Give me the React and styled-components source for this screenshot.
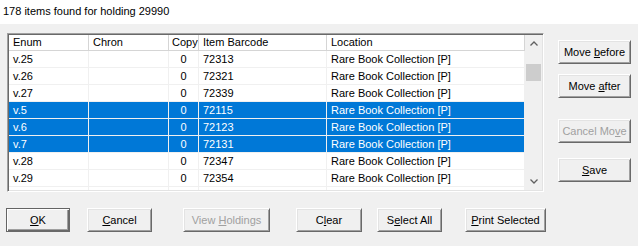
import React from "react"
import styled, { createGlobalStyle } from "styled-components"

const GlobalStyle = createGlobalStyle`
  html, body {
    margin: 0;
    padding: 0;
    background: #f0f0f0;
  }
  body {
    font-family: "Liberation Sans", Arial, sans-serif;
    font-size: 11px;
    color: #000;
  }
`

const rows = [
  { enumv: "v.25", copy: "0", barcode: "72313", location: "Rare Book Collection [P]" },
  { enumv: "v.26", copy: "0", barcode: "72321", location: "Rare Book Collection [P]" },
  { enumv: "v.27", copy: "0", barcode: "72339", location: "Rare Book Collection [P]" },
  { enumv: "v.5", copy: "0", barcode: "72115", location: "Rare Book Collection [P]", selected: true },
  { enumv: "v.6", copy: "0", barcode: "72123", location: "Rare Book Collection [P]", selected: true },
  { enumv: "v.7", copy: "0", barcode: "72131", location: "Rare Book Collection [P]", selected: true },
  { enumv: "v.28", copy: "0", barcode: "72347", location: "Rare Book Collection [P]" },
  { enumv: "v.29", copy: "0", barcode: "72354", location: "Rare Book Collection [P]" },
  { enumv: "v.30", copy: "0", barcode: "72362", location: "Rare Book Collection [P]" },
]

const Key = ({ children }) => <u>{children}</u>

const App = () => (
  <>
    <GlobalStyle />
    <Window>
      <TitleStrip>178 items found for holding 29990</TitleStrip>
      <Main>
        <ListBox>
          <Table>
            <HeaderRow>
              <HeadCell>Enum</HeadCell>
              <HeadCell>Chron</HeadCell>
              <HeadCell>Copy</HeadCell>
              <HeadCell>Item Barcode</HeadCell>
              <HeadCell>Location</HeadCell>
            </HeaderRow>
            {rows.map((r, i) => (
              <Row key={i} selected={r.selected}>
                <Cell>{r.enumv}</Cell>
                <Cell></Cell>
                <Cell center>{r.copy}</Cell>
                <Cell>{r.barcode}</Cell>
                <Cell>{r.location}</Cell>
              </Row>
            ))}
          </Table>
          <ScrollBar>
            <Arrow>
              <svg width="8" height="5" viewBox="0 0 8 5">
                <polyline points="0.5,4.5 4,1 7.5,4.5" fill="none" stroke="#606060" strokeWidth="1.3" />
              </svg>
            </Arrow>
            <Track>
              <Thumb />
            </Track>
            <Arrow>
              <svg width="8" height="5" viewBox="0 0 8 5">
                <polyline points="0.5,0.5 4,4 7.5,0.5" fill="none" stroke="#606060" strokeWidth="1.3" />
              </svg>
            </Arrow>
          </ScrollBar>
        </ListBox>
        <SideButtons>
          <Button gap={7}><Label>Move <Key>b</Key>efore</Label></Button>
          <Button gap={10}><Label>Move <Key>a</Key>fter</Label></Button>
          <Button gap={21} disabled><Label>Cancel Mo<Key>v</Key>e</Label></Button>
          <Button gap={15}><Label><Key>S</Key>ave</Label></Button>
        </SideButtons>
      </Main>
      <Footer>
        <Button isDefault w={64} left={6}><Label><Key>O</Key>K</Label></Button>
        <Button w={65} left={17}><Label><Key>C</Key>ancel</Label></Button>
        <Button w={87} left={31} disabled><Label>View <Key>H</Key>oldings</Label></Button>
        <Button w={66} left={26}><Label>C<Key>l</Key>ear</Label></Button>
        <Button w={65} left={15}><Label>S<Key>e</Key>lect All</Label></Button>
        <Button w={81} left={23}><Label><Key>P</Key>rint Selected</Label></Button>
      </Footer>
    </Window>
  </>
)

export default App

const Window = styled.div`
  width: 638px;
  height: 246px;
  background: #f0f0f0;
  display: flex;
  flex-direction: column;
  overflow: hidden;
`

const TitleStrip = styled.div`
  height: 24px;
  background: #fff;
  padding: 5px 0 0 3px;
  box-sizing: border-box;
  line-height: 13px;
`

const Main = styled.div`
  display: flex;
  align-items: flex-start;
  padding: 9px 0 0 7px;
`

const ListBox = styled.div`
  width: 537px;
  height: 159px;
  box-sizing: border-box;
  border-top: 1px solid #a0a0a0;
  border-left: 1px solid #a0a0a0;
  border-right: 1px solid #ffffff;
  border-bottom: 1px solid #ffffff;
  box-shadow: inset 1px 1px 0 #696969, inset -1px -1px 0 #e3e3e3;
  padding: 1px;
  display: flex;
  background: #fff;
`

const Table = styled.div`
  width: 516px;
  overflow: hidden;
  background: #fff;
`

const HeaderRow = styled.div`
  display: grid;
  grid-template-columns: 80px 80px 30px 128px 198px;
  height: 16px;
  box-sizing: border-box;
  border-bottom: 1px solid #d5d5d5;
`

const HeadCell = styled.div`
  padding-left: 4px;
  line-height: 15px;
  border-right: 1px solid #d5d5d5;
  white-space: nowrap;
  overflow: hidden;
  &:nth-child(3) {
    padding-left: 3px;
  }
`

const Row = styled.div`
  display: grid;
  grid-template-columns: 80px 80px 30px 128px 198px;
  height: 17px;
  box-sizing: border-box;
  border-bottom: 1px solid #f0f0f0;
  background: ${(p) => (p.selected ? "#0078d7" : "#fff")};
  color: ${(p) => (p.selected ? "#fff" : "#000")};
`

const Cell = styled.div`
  padding-left: ${(p) => (p.center ? "0" : "4px")};
  text-align: ${(p) => (p.center ? "center" : "left")};
  line-height: 16px;
  border-right: 1px solid #f0f0f0;
  white-space: nowrap;
  overflow: hidden;
`

const ScrollBar = styled.div`
  width: 17px;
  display: flex;
  flex-direction: column;
  background: #f0f0f0;
`

const Arrow = styled.div`
  height: 17px;
  display: flex;
  align-items: center;
  justify-content: center;
`

const Track = styled.div`
  flex: 1;
  padding: 12px 1px 0;
`

const Thumb = styled.div`
  height: 17px;
  background: #cdcdcd;
`

const SideButtons = styled.div`
  display: flex;
  flex-direction: column;
  margin-left: 14px;
`

const Label = styled.span`
  white-space: pre;
  u {
    text-decoration: underline;
    text-underline-offset: 1px;
  }
`

const Button = styled.div`
  width: ${(p) => (p.w ? p.w : 73)}px;
  height: 24px;
  margin-top: ${(p) => (p.gap ? p.gap : 0)}px;
  margin-left: ${(p) => (p.left ? p.left : 0)}px;
  box-sizing: border-box;
  display: flex;
  align-items: center;
  justify-content: center;
  background: #f0f0f0;
  color: ${(p) => (p.disabled ? "#a0a0a0" : "#000")};
  border-top: 1px solid ${(p) => (p.isDefault ? "#646464" : "#ffffff")};
  border-left: 1px solid ${(p) => (p.isDefault ? "#646464" : "#ffffff")};
  border-right: 1px solid #696969;
  border-bottom: 1px solid #696969;
  box-shadow: ${(p) =>
    p.isDefault
      ? "inset 1px 1px 0 #ffffff, inset -1px -1px 0 #696969, inset -2px -2px 0 #a0a0a0"
      : "inset 1px 1px 0 #e3e3e3, inset -1px -1px 0 #a0a0a0"};
`

const Footer = styled.div`
  display: flex;
  margin-top: 16px;
`
